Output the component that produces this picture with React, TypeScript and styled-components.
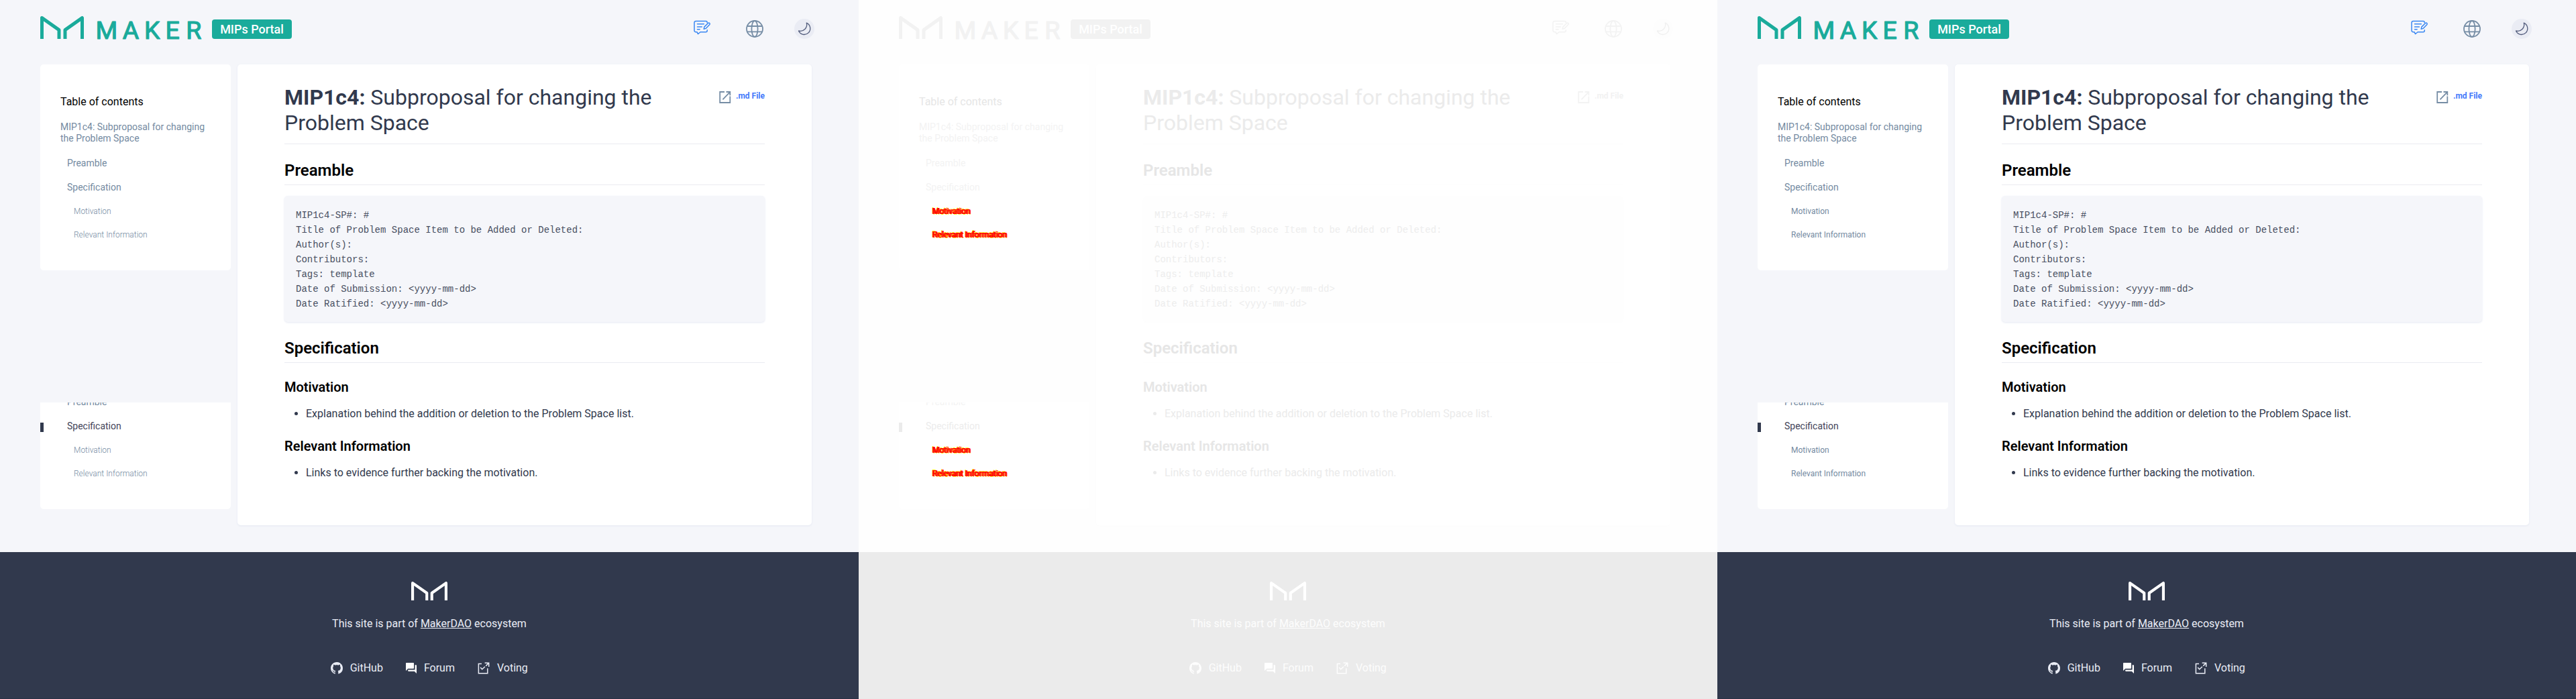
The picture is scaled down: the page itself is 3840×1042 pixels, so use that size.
import React from 'react';
import styled, { createGlobalStyle, css, ThemeProvider } from 'styled-components';

const palette = {
  page: '#f5f6fa',
  card: '#ffffff',
  teal: '#1aab9b',
  badgeText: '#ffffff',
  black: '#000000',
  text: '#31394d',
  toc: '#748aa1',
  active: '#434358',
  rule: '#eaebf1',
  code: '#f5f6fa',
  codeText: '#484f61',
  blue: '#3a87f2',
  link: '#447afb',
  globe: '#768da5',
  moonBg: '#eaecf4',
  moon: '#525c7c',
  fileIcon: '#768da5',
  footer: '#31394d',
  footerEdge: '#2a3245',
  footerText: '#e9ecf5',
  footerLogo: '#ffffff',
  shadow: '#e4e8f2',
};

type Palette = typeof palette;
type Mode = 'before' | 'diff' | 'after';

/* Grayscale value of a colour at ten percent strength over white. */
const fade = (hex: string) => {
  const n = parseInt(hex.slice(1), 16);
  const luma = 0.299 * (n >> 16) + 0.587 * ((n >> 8) & 255) + 0.114 * (n & 255);
  const v = Math.round(255 + (luma - 255) * 0.1);
  return `rgb(${v}, ${v}, ${v})`;
};

const faded = Object.fromEntries(
  Object.entries(palette).map(([key, value]) => [key, fade(value)]),
) as Palette;

type T = { theme: { c: Palette; mode: Mode } };
const color = (key: keyof Palette) => (p: any) => (p as T).theme.c[key];

const GlobalStyle = createGlobalStyle`
  * { box-sizing: border-box; }
  body { margin: 0; background: #f5f6fa; font-family: Roboto, "Liberation Sans", sans-serif; }
`;

const Strip = styled.div`
  display: grid;
  grid-template-columns: repeat(3, 1280px);
  width: 3840px;
  height: 1042px;
  overflow: hidden;
`;

const Page = styled.div`
  display: flex;
  flex-direction: column;
  height: 1042px;
  background: ${color('page')};
  color: ${color('text')};
`;

const Header = styled.header`
  display: flex;
  justify-content: space-between;
  align-items: flex-end;
  height: 58px;
  margin-bottom: 38px;
  padding: 0 66px 0 60px;
`;

const Brand = styled.div`
  display: flex;
  align-items: flex-end;
  color: ${color('teal')};
`;

const Wordmark = styled.svg`
  display: block;
  overflow: visible;
  margin-left: 18px;
  fill: currentColor;
  stroke: currentColor;
  stroke-width: 1.2px;
  stroke-linejoin: round;
  font: 400 37.5px Roboto, sans-serif;
`;

const Badge = styled.span`
  width: 119px;
  height: 29px;
  margin-left: 13px;
  border-radius: 4px;
  background: ${color('teal')};
  color: ${color('badgeText')};
  font-size: 18px;
  font-weight: 500;
  line-height: 30px;
  text-align: center;
`;

const Tools = styled.div`
  display: flex;
  align-items: center;
  height: 30px;
`;

const ToolIcon = styled.svg<{ $tone: keyof Palette; $gap?: number; $lift?: number }>`
  display: block;
  margin-right: ${(p) => p.$gap ?? 0}px;
  margin-bottom: ${(p) => p.$lift ?? 0}px;
  color: ${(p: any) => p.theme.c[p.$tone]};
  fill: none;
  stroke: currentColor;
`;

const MoonDisc = styled.div`
  width: 30px;
  height: 30px;
  border-radius: 50%;
  background: ${color('moonBg')};
`;

const Content = styled.div`
  display: grid;
  grid-template-columns: 284px 856px;
  column-gap: 10px;
  height: 687px;
  margin: 0 0 40px 60px;
`;

const SideColumn = styled.div`
  display: flex;
  flex-direction: column;
  gap: 197px;
`;

const TocCard = styled.nav<{ $clipped?: boolean }>`
  display: flex;
  flex-direction: column;
  flex: none;
  justify-content: flex-end;
  height: ${(p) => (p.$clipped ? 159 : 307)}px;
  padding-bottom: 36px;
  overflow: hidden;
  border-radius: ${(p) => (p.$clipped ? '0 0 5px 5px' : '5px')};
  background: ${color('card')};
`;

const TocTitle = styled.div`
  padding: 10px 30px;
  color: ${color('black')};
  font-size: 16px;
  font-weight: 400;
  line-height: 19.2px;
`;

const TocItem = styled.div<{ $level: 1 | 2 | 3; $active?: boolean }>`
  position: relative;
  flex: none;
  padding: 10px 30px 10px ${(p) => 20 + p.$level * 10}px;
  color: ${(p: any) => (p.$active ? p.theme.c.active : p.theme.c.toc)};
  font-size: 14px;
  line-height: 1.2;

  ${(p) =>
    p.$level === 3 &&
    css`
      font-size: 12px;
      font-weight: ${(q: any) => (q.theme.mode === 'before' ? 300 : 400)};
      ${(q: any) =>
        q.theme.mode === 'diff' &&
        css`
          color: #ff0000;
          text-shadow: 1px 0 #ff0000, -1px 0 #ff0000, 1px 1px #ffff00, -1px -1px #ffff00;
        `}
    `}

  ${(p) =>
    p.$active &&
    css`
      &::before {
        content: '';
        position: absolute;
        left: 0;
        top: 12.5px;
        width: 5px;
        height: 14px;
        background: ${color('text')};
      }
    `}
`;

const Article = styled.main`
  height: 687px;
  padding: 30px 70px 0;
  border-radius: 5px;
  background: ${color('card')};
  box-shadow: 0 1px 3px ${color('shadow')};
`;

const TitleRow = styled.div`
  display: flex;
  justify-content: space-between;
  height: 89px;
  border-bottom: 1px solid ${color('rule')};
`;

const Title = styled.h1`
  width: 600px;
  margin: 0;
  font-size: 32px;
  font-weight: 400;
  line-height: 38.4px;

  b {
    font-weight: 700;
  }
`;

const FileLink = styled.a`
  display: flex;
  gap: 7px;
  height: 18px;
  margin-top: 10px;
  color: ${color('link')};
  font-size: 12px;
  font-weight: 700;
  line-height: 15px;
`;

const SectionTitle = styled.h2`
  height: 37px;
  margin: 24px 0 0;
  border-bottom: 1px solid ${color('rule')};
  color: ${color('black')};
  font-size: 24px;
  font-weight: 600;
  line-height: 30px;
`;

const CodeBlock = styled.pre`
  height: 188px;
  margin: 16px 0 0;
  padding: 18px 16px 16px 17px;
  border-radius: 5px;
  background: ${color('code')};
  box-shadow: 0 1px 3px ${color('shadow')};
  color: ${color('codeText')};
  font: 14px/22px 'Liberation Mono', 'Courier New', monospace;
`;

const SubTitle = styled.h3`
  margin: 24px 0 16px;
  color: ${color('black')};
  font-size: 20px;
  font-weight: 600;
  line-height: 24px;
`;

const List = styled.ul`
  margin: 0;
  padding-left: 32px;
  font-size: 16px;
  line-height: 24px;
`;

const Footer = styled.footer`
  display: flex;
  flex-direction: column;
  align-items: center;
  height: 219px;
  padding-top: 44px;
  border-bottom: 1px solid ${color('footerEdge')};
  background: ${color('footer')};
  color: ${color('footerText')};
  font-size: 16px;
  line-height: 19px;
`;

const FooterLogo = styled.div`
  color: ${color('footerLogo')};
`;

const FooterNote = styled.p`
  margin: 25px 0 0;

  a {
    text-decoration: underline;
  }
`;

const FooterLinks = styled.div`
  display: flex;
  gap: 34.5px;
  margin-top: 47px;
`;

const FooterLink = styled.a`
  display: flex;
  align-items: center;
  gap: 10.5px;
`;

const MarkSvg = styled.svg`
  display: block;
  fill: none;
  stroke: currentColor;
  stroke-width: 5px;
  stroke-linejoin: round;
`;

function MakerMark({ width, height }: { width: number; height: number }) {
  return (
    <MarkSvg width={width} height={height} viewBox="0 0 65 34" preserveAspectRatio="none">
      <path d="M2.5 34V2.6L28 20.6V34M37 34V20.6L62.5 2.6V34" />
    </MarkSvg>
  );
}

function TopBar() {
  return (
    <Header>
      <Brand>
        <MakerMark width={65} height={34} />
        <Wordmark width={160} height={34}>
          <text x="-0.4 39.8 72 103.6 134.2" y="33.5">MAKER</text>
        </Wordmark>
        <Badge>MIPs Portal</Badge>
      </Brand>
      <Tools>
        <ToolIcon width={25} height={22} $tone="blue" $gap={53} $lift={4} strokeWidth={1.5} strokeLinejoin="round" strokeLinecap="round">
          <path d="M20.2 3.8V3.5a2 2 0 0 0-2-2H3.2A2.2 2.2 0 0 0 1 3.7V15.5a2.2 2.2 0 0 0 2.2 2.2H5l1.5 3 3.5-3h8.2a2 2 0 0 0 2-2v-1" />
          <path d="M5.5 5.7h9.8M5.5 9.9h6.8M5.5 13.700h3.6" />
          <path d="M15.2 13.3l.7-3.2 5.6-5.6a1.5 1.5 0 0 1 2.2 2.2l-5.5 5.7z" />
        </ToolIcon>
        <ToolIcon width={26} height={26} $tone="globe" $gap={46} strokeWidth={1.8}>
          <circle cx="13" cy="13" r="12" />
          <ellipse cx="13" cy="13" rx="4.6" ry="12" />
          <path d="M1.6 9h22.8M1.6 17.3h22.8" />
        </ToolIcon>
        <MoonDisc>
          <ToolIcon width={30} height={30} $tone="moon" strokeWidth={1.3} strokeLinejoin="round">
            <path d="M18.3 6.2A9 9 0 1 1 6.5 18A9.6 9.6 0 0 0 18.3 6.2z" />
          </ToolIcon>
        </MoonDisc>
      </Tools>
    </Header>
  );
}

function TocTail({ active }: { active?: boolean }) {
  return (
    <>
      <TocItem $level={2}>Preamble</TocItem>
      <TocItem $level={2} $active={active}>Specification</TocItem>
      <TocItem $level={3}>Motivation</TocItem>
      <TocItem $level={3}>Relevant Information</TocItem>
    </>
  );
}

const template = `MIP1c4-SP#: #
Title of Problem Space Item to be Added or Deleted:
Author(s):
Contributors:
Tags: template
Date of Submission: <yyyy-mm-dd>
Date Ratified: <yyyy-mm-dd>`;

function Portal({ mode }: { mode: Mode }) {
  return (
    <ThemeProvider theme={{ c: mode === 'diff' ? faded : palette, mode }}>
      <Page>
        <TopBar />
        <Content>
          <SideColumn>
            <TocCard>
              <TocTitle>Table of contents</TocTitle>
              <TocItem $level={1}>MIP1c4: Subproposal for changing the Problem Space</TocItem>
              <TocTail />
            </TocCard>
            <TocCard $clipped>
              <TocTail active />
            </TocCard>
          </SideColumn>
          <Article>
            <TitleRow>
              <Title><b>MIP1c4:</b> Subproposal for changing the Problem Space</Title>
              <FileLink>
                <ToolIcon width={18} height={18} $tone="fileIcon" strokeWidth={1.8}>
                  <path d="M8 1H1.2v16H16.3V7.6M10.5 1h5.8v5.2M16 1.3L5.4 12.3" />
                </ToolIcon>
                .md File
              </FileLink>
            </TitleRow>
            <SectionTitle>Preamble</SectionTitle>
            <CodeBlock>{template}</CodeBlock>
            <SectionTitle>Specification</SectionTitle>
            <SubTitle>Motivation</SubTitle>
            <List>
              <li>Explanation behind the addition or deletion to the Problem Space list.</li>
            </List>
            <SubTitle>Relevant Information</SubTitle>
            <List>
              <li>Links to evidence further backing the motivation.</li>
            </List>
          </Article>
        </Content>
        <Footer>
          <FooterLogo><MakerMark width={54} height={28} /></FooterLogo>
          <FooterNote>This site is part of <a>MakerDAO</a> ecosystem</FooterNote>
          <FooterLinks>
            <FooterLink>
              <svg width="18" height="18" viewBox="0 0 16 16" fill="currentColor">
                <path d="M8 0C3.58 0 0 3.58 0 8c0 3.54 2.29 6.53 5.47 7.59.4.07.55-.17.55-.38 0-.19-.01-.82-.01-1.49-2.01.37-2.53-.49-2.69-.94-.09-.23-.48-.94-.82-1.13-.28-.15-.68-.52-.01-.53.63-.01 1.08.58 1.23.82.72 1.21 1.87.87 2.33.66.07-.52.28-.87.51-1.07-1.78-.2-3.64-.89-3.64-3.95 0-.87.31-1.59.82-2.15-.08-.2-.36-1.02.08-2.12 0 0 .67-.21 2.2.82.64-.18 1.32-.27 2-.27s1.36.09 2 .27c1.53-1.04 2.2-.82 2.2-.82.44 1.1.16 1.92.08 2.12.51.56.82 1.27.82 2.15 0 3.07-1.87 3.75-3.65 3.95.29.25.54.73.54 1.48 0 1.07-.01 1.93-.01 2.2 0 .21.15.46.55.38A8.01 8.01 0 0 0 16 8c0-4.42-3.58-8-8-8z" />
              </svg>
              GitHub
            </FooterLink>
            <FooterLink>
              <FooterLogo as="svg" width="16" height="16" viewBox="2 2 20 20">
                <path fill="currentColor" d="M21 6h-2v9H6v2c0 .55.45 1 1 1h11l4 4V7c0-.55-.45-1-1-1zm-4 6V3c0-.55-.45-1-1-1H3c-.55 0-1 .45-1 1v14l4-4h10c.55 0 1-.45 1-1z" />
              </FooterLogo>
              Forum
            </FooterLink>
            <FooterLink>
              <svg width="18" height="18" fill="none" stroke="currentColor" strokeWidth="1.5">
                <path d="M6 2.5H1.4V16.7H14.8V9.3M10.6 1.2H16.7V7M16.5 1.4L12.3 5.6M4.2 8l2.5 2.7 4.2-3.9" />
              </svg>
              Voting
            </FooterLink>
          </FooterLinks>
        </Footer>
      </Page>
    </ThemeProvider>
  );
}

export default function App() {
  return (
    <>
      <GlobalStyle />
      <Strip>
        <Portal mode="before" />
        <Portal mode="diff" />
        <Portal mode="after" />
      </Strip>
    </>
  );
}
